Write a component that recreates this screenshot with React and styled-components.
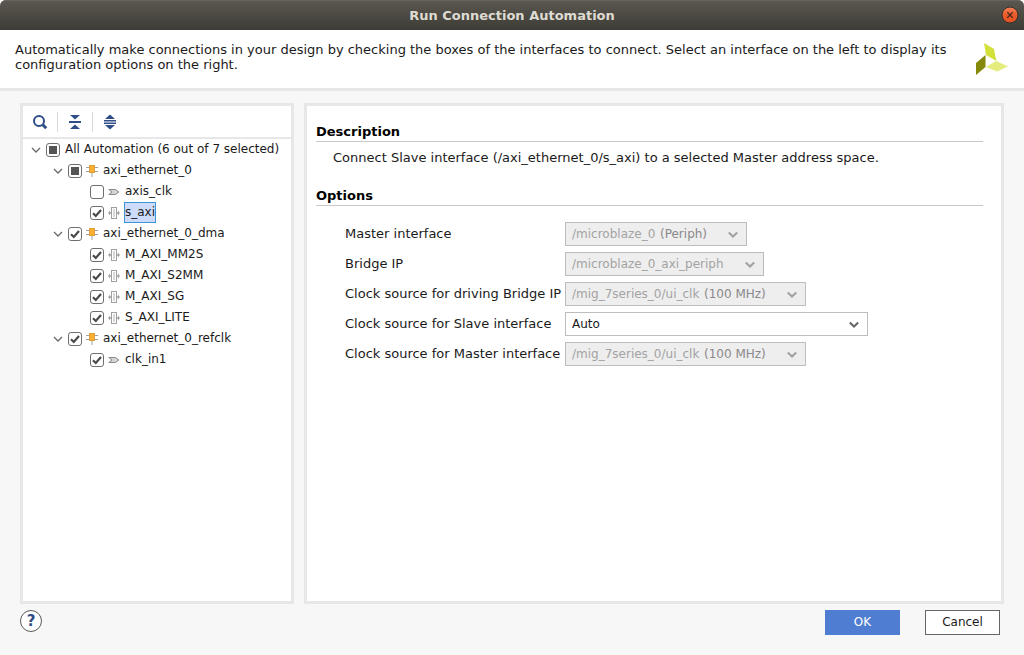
import React, { useState } from "react";
import styled, { createGlobalStyle, css } from "styled-components";

const GlobalStyle = createGlobalStyle`
  * {
    box-sizing: border-box;
  }

  body {
    margin: 0;
    background-color: #fff;
    color: #1a1a1a;
    font-family: "DejaVu Sans", sans-serif;
    font-size: 13px;
    line-height: 15px;
  }

  button,
  input,
  select {
    margin: 0;
    font: inherit;
    color: inherit;
  }
`;

const Window = styled.div`
  display: flex;
  flex-direction: column;
  min-height: 100vh;
  background-color: #f7f7f7;
  border-radius: 6px 6px 0 0;
`;

const TitleBar = styled.header`
  display: grid;
  grid-template-columns: 1fr auto 1fr;
  align-items: center;
  height: 30px;
  padding: 0 5px;
  border-radius: 6px 6px 0 0;
  background-image: linear-gradient(#5b5850, #3d3c36);
  box-shadow: inset 0 1px #66645c;
`;

const WindowTitle = styled.h1`
  grid-column: 2;
  margin: 0;
  color: #dfdbd2;
  font-size: 13px;
  font-weight: bold;
`;

const CloseButton = styled.button`
  justify-self: end;
  display: flex;
  padding: 0;
  border: 0;
  background: none;
`;

const Intro = styled.div`
  display: flex;
  justify-content: space-between;
  gap: 16px;
  height: 61px;
  padding: 12px 16px 0 15px;
  border-bottom: 3px solid #e7e7e7;
  background-color: #fff;
`;

const IntroText = styled.p`
  max-width: 945px;
  margin: 0;
`;

const Logo = styled.svg`
  flex: none;
`;

const Body = styled.main`
  flex: 1;
  display: grid;
  grid-template-columns: 274px 1fr;
  gap: 10px;
  padding: 12px 20px 0;
`;

const Panel = styled.section`
  border: 3px solid #e7e7e7;
  background-color: #fff;
`;

const Toolbar = styled.div`
  display: flex;
  align-items: center;
  height: 33px;
  border-bottom: 2px solid #e7e7e7;
`;

const ToolButton = styled.button`
  display: flex;
  justify-content: center;
  align-items: center;
  width: 34px;
  height: 20px;
  padding: 0;
  border: 0;
  background: none;
  color: #2f4e87;

  & + & {
    width: 35px;
    border-left: 1px solid #d8d8d8;
  }
`;

const TreeList = styled.ul`
  margin: 0;
  padding: 0 0 0 ${({ $nested }) => ($nested ? 22 : 5)}px;
  font-size: 12px;
  list-style: none;
`;

const TreeRow = styled.div`
  display: flex;
  align-items: center;
  height: 21px;
`;

const Toggle = styled.button`
  flex: none;
  display: flex;
  justify-content: center;
  align-items: center;
  width: 16px;
  height: 16px;
  margin-right: 2px;
  padding: 0;
  border: 0;
  background: none;
  visibility: ${({ $hidden }) => ($hidden ? "hidden" : "visible")};
`;

const CheckWrap = styled.span`
  display: grid;
  place-items: center;
  margin-right: 4px;

  > * {
    grid-area: 1 / 1;
  }
`;

const Check = styled.input`
  appearance: none;
  width: 14px;
  height: 14px;
  border: 1px solid #6f6f6f;
  border-radius: 3px;
  background-color: #fff;
`;

const CheckMark = styled.svg`
  pointer-events: none;
`;

const TreeIcon = styled.svg`
  flex: none;
  margin-right: 4px;
`;

const TreeLabel = styled.label`
  padding: 2px 0;
  border: 1px solid transparent;
  white-space: nowrap;
  ${({ $selected }) =>
    $selected &&
    css`
      border-color: #3d95d9;
      background-color: #cddcfb;
    `}
`;

const Details = styled(Panel)`
  padding: 15px 18px 16px 9px;
`;

const SectionHeading = styled.h2`
  margin: 0;
  padding-top: 2px;
  border-bottom: 1px solid #c8c8c8;
  color: #000;
  font-size: 13px;
  font-weight: bold;
  line-height: 18px;
`;

const Description = styled.p`
  margin: 8px 0 19px 17px;
  line-height: 16px;
`;

const OptionGrid = styled.div`
  display: grid;
  grid-template-columns: 220px 1fr;
  align-items: center;
  row-gap: 6px;
  padding: 16px 0 0 29px;
`;

const OptionLabel = styled.label`
  padding-bottom: 2px;
`;

const SelectBox = styled.div`
  position: relative;
  justify-self: start;
  display: flex;
  align-items: center;
  width: ${({ $wide }) => ($wide ? "303px" : "auto")};
  height: 24px;
  border: 1px solid #bdbdbd;
  background-color: ${({ $disabled }) => ($disabled ? "#eee" : "#fff")};
  color: ${({ $disabled }) => ($disabled ? "#8a888b" : "#1a1a1a")};
  font-size: 12px;
`;

const Select = styled.select`
  flex: 1;
  appearance: none;
  height: 22px;
  padding: 0 ${({ $hasNote }) => ($hasNote ? 0 : 39)}px 0 6px;
  border: 0;
  background: none;

  &:disabled {
    color: #a3a3a3;
    opacity: 1;
  }
`;

const SelectNote = styled.span`
  padding: 0 39px 0 4px;
  white-space: nowrap;
`;

const SelectArrow = styled.svg`
  position: absolute;
  right: 8px;
  top: 8px;
  pointer-events: none;
`;

const Footer = styled.footer`
  display: flex;
  align-items: flex-start;
  gap: 25px;
  padding: 6px 24px 20px 20px;
`;

const HelpButton = styled.button`
  width: 22px;
  height: 22px;
  margin-right: auto;
  padding: 0;
  border: 1px solid #5a5a5a;
  border-radius: 50%;
  background-color: #fff;
  color: #2f4e87;
  font-size: 15px;
  font-weight: bold;
`;

const DialogButton = styled.button`
  width: 75px;
  height: 25px;
  padding: 0;
  border: 1px solid ${({ $primary }) => ($primary ? "#4f7dd1" : "#666")};
  background-color: ${({ $primary }) => ($primary ? "#4f7dd1" : "#fff")};
  color: ${({ $primary }) => ($primary ? "#fff" : "#1a1a1a")};
  font-size: 12px;
`;

const tree = [
  {
    id: "all",
    label: "All Automation (6 out of 7 selected)",
    state: "mixed",
    children: [
      {
        id: "axi_ethernet_0",
        icon: "block",
        state: "mixed",
        children: [
          { id: "axis_clk", icon: "pin", state: "off" },
          { id: "s_axi", icon: "bus", state: "on" },
        ],
      },
      {
        id: "axi_ethernet_0_dma",
        icon: "block",
        state: "on",
        children: [
          { id: "M_AXI_MM2S", icon: "bus", state: "on" },
          { id: "M_AXI_S2MM", icon: "bus", state: "on" },
          { id: "M_AXI_SG", icon: "bus", state: "on" },
          { id: "S_AXI_LITE", icon: "bus", state: "on" },
        ],
      },
      {
        id: "axi_ethernet_0_refclk",
        icon: "block",
        state: "on",
        children: [{ id: "clk_in1", icon: "pin", state: "on" }],
      },
    ],
  },
];

const options = [
  { id: "master", label: "Master interface", value: "/microblaze_0", note: "(Periph)" },
  { id: "bridge", label: "Bridge IP", value: "/microblaze_0_axi_periph" },
  {
    id: "clk-bridge",
    label: "Clock source for driving Bridge IP",
    value: "/mig_7series_0/ui_clk",
    note: "(100 MHz)",
  },
  { id: "clk-slave", label: "Clock source for Slave interface", value: "Auto", enabled: true },
  {
    id: "clk-master",
    label: "Clock source for Master interface",
    value: "/mig_7series_0/ui_clk",
    note: "(100 MHz)",
  },
];

const icons = {
  block: (
    <>
      <path d="M0 3.5h12M0 7.5h12M6 9v4" stroke="#a0a0a0" fill="none" />
      <rect x="3.5" y="1.5" width="5" height="7" fill="#fdb02f" stroke="#dc9f3f" />
    </>
  ),
  pin: (
    <path
      d="M0.8 4.5h6.5l3.7 2.500-3.700 2.500H0.800L4 7z"
      fill="#d4d4d4"
      stroke="#8a8a8a"
    />
  ),
  bus: (
    <>
      <path d="M0 7h3M9 7h3" stroke="#a0a0a0" />
      <path d="M1 4.5v5l2-2.5zM11 4.5v5L9 7z" fill="#a0a0a0" />
      <rect x="3.5" y="1.5" width="5" height="11" fill="#fff" stroke="#a0a0a0" />
      <rect x="5" y="3" width="2" height="8" fill="#d8d8d8" />
    </>
  ),
};

function TreeNode({ node, selected, onSelect }) {
  const [open, setOpen] = useState(true);
  const [state, setState] = useState(node.state);

  return (
    <li>
      <TreeRow>
        <Toggle
          type="button"
          aria-label={`Toggle ${node.id}`}
          aria-expanded={open}
          $hidden={!node.children}
          onClick={() => setOpen(!open)}
        >
          <svg width="10" height="8" viewBox="0 0 10 8">
            <path d="M1 2l4 4 4-4" fill="none" stroke="#6a6a6a" strokeWidth="1.3" />
          </svg>
        </Toggle>
        <CheckWrap>
          <Check
            type="checkbox"
            id={node.id}
            checked={state === "on"}
            ref={(el) => {
              if (el) el.indeterminate = state === "mixed";
            }}
            onChange={() => setState(state === "on" ? "off" : "on")}
          />
          <CheckMark width="14" height="14" viewBox="0 0 14 14">
            {state === "on" && (
              <path d="M3 7.2l2.8 2.8 5.2-6" fill="none" stroke="#4a4a4a" strokeWidth="2.2" />
            )}
            {state === "mixed" && <rect x="3" y="3" width="8" height="8" fill="#555" />}
          </CheckMark>
        </CheckWrap>
        {node.icon && (
          <TreeIcon width="12" height="14" viewBox="0 0 12 14">
            {icons[node.icon]}
          </TreeIcon>
        )}
        <TreeLabel
          htmlFor={node.id}
          $selected={selected === node.id}
          onClick={() => onSelect(node.id)}
        >
          {node.label || node.id}
        </TreeLabel>
      </TreeRow>
      {node.children && open && (
        <TreeList $nested>
          {node.children.map((child) => (
            <TreeNode key={child.id} node={child} selected={selected} onSelect={onSelect} />
          ))}
        </TreeList>
      )}
    </li>
  );
}

function OptionRow({ option }) {
  const disabled = !option.enabled;

  return (
    <>
      <OptionLabel htmlFor={option.id}>{option.label}</OptionLabel>
      <SelectBox $disabled={disabled} $wide={option.enabled}>
        <Select id={option.id} disabled={disabled} $hasNote={Boolean(option.note)}>
          <option>{option.value}</option>
        </Select>
        {option.note && <SelectNote>{option.note}</SelectNote>}
        <SelectArrow width="10" height="8" viewBox="0 0 10 8">
          <path
            d="M0.8 1.5L5 5.5l4.2-4"
            fill="none"
            stroke={disabled ? "#a0a0a0" : "#666"}
            strokeWidth="2"
          />
        </SelectArrow>
      </SelectBox>
    </>
  );
}

function App() {
  const [selected, setSelected] = useState("s_axi");

  return (
    <Window>
      <GlobalStyle />
      <TitleBar>
        <WindowTitle>Run Connection Automation</WindowTitle>
        <CloseButton type="button" aria-label="Close">
          <svg width="18" height="18" viewBox="0 0 18 18">
            <defs>
              <linearGradient id="close-fill" x1="0" y1="0" x2="0" y2="1">
                <stop offset="0" stopColor="#f6825a" />
                <stop offset="0.5" stopColor="#ec5a29" />
                <stop offset="1" stopColor="#e4501f" />
              </linearGradient>
            </defs>
            <circle cx="9" cy="9" r="8" fill="url(#close-fill)" stroke="#33312c" />
            <path d="M6.3 6.3l5.4 5.4M11.7 6.3l-5.4 5.4" stroke="#4a2a1c" strokeWidth="1.3" />
          </svg>
        </CloseButton>
      </TitleBar>
      <Intro>
        <IntroText>
          Automatically make connections in your design by checking the boxes of the interfaces to
          connect. Select an interface on the left to display its configuration options on the
          right.
        </IntroText>
        <Logo width="32" height="34" viewBox="0 0 32 34">
          <path d="M8 1l10 6 2.300 12L10 13z" fill="#d3e03a" />
          <path d="M0 21l9.500-8v12L0 33z" fill="#868a0c" />
          <path d="M10 25l10.300-6L32 24.500 21 29.500z" fill="#e4ec7e" />
        </Logo>
      </Intro>
      <Body>
        <Panel>
          <Toolbar>
            <ToolButton type="button" aria-label="Search">
              <svg width="16" height="16" viewBox="0 0 16 16">
                <circle cx="7" cy="7" r="5" fill="none" stroke="currentColor" strokeWidth="2" />
                <path d="M10.800 10.800l3.400 3.400" stroke="currentColor" strokeWidth="3" />
              </svg>
            </ToolButton>
            <ToolButton type="button" aria-label="Collapse all">
              <svg width="14" height="16" viewBox="0 0 14 16" fill="currentColor">
                <path d="M2 1h10L7 5.500zM2 15h10L7 10.500zM1 7h12v2H1z" />
              </svg>
            </ToolButton>
            <ToolButton type="button" aria-label="Expand all">
              <svg width="14" height="16" viewBox="0 0 14 16" fill="currentColor">
                <path d="M2 5h10L7 0.500zM2 11h10L7 15.500zM1 6h12v1.500H1zM1 8.500h12v1.500H1z" />
              </svg>
            </ToolButton>
          </Toolbar>
          <TreeList>
            {tree.map((node) => (
              <TreeNode key={node.id} node={node} selected={selected} onSelect={setSelected} />
            ))}
          </TreeList>
        </Panel>
        <Details>
          <SectionHeading>Description</SectionHeading>
          <Description>
            Connect Slave interface (/axi_ethernet_0/s_axi) to a selected Master address space.
          </Description>
          <SectionHeading>Options</SectionHeading>
          <OptionGrid>
            {options.map((option) => (
              <OptionRow key={option.id} option={option} />
            ))}
          </OptionGrid>
        </Details>
      </Body>
      <Footer>
        <HelpButton type="button" aria-label="Help">
          ?
        </HelpButton>
        <DialogButton type="button" $primary>
          OK
        </DialogButton>
        <DialogButton type="button">Cancel</DialogButton>
      </Footer>
    </Window>
  );
}

export default App;
